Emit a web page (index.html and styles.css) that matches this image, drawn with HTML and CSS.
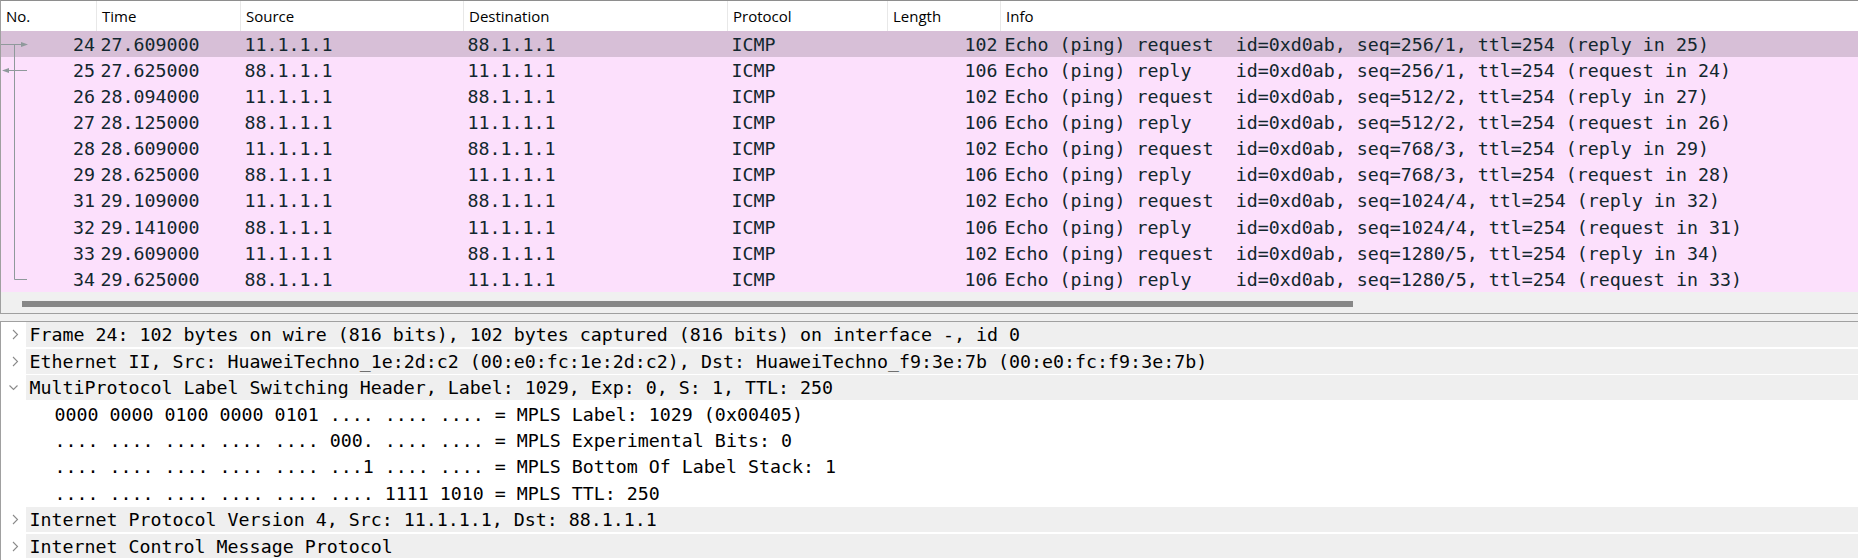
FILE: index.html
```html
<!DOCTYPE html>
<html>
<head>
<meta charset="utf-8">
<link rel="stylesheet" href="styles.css">
</head>
<body>
<div class="plist">
  <div class="phead">
    <div class="hc">No.</div>
    <div class="hc">Time</div>
    <div class="hc">Source</div>
    <div class="hc">Destination</div>
    <div class="hc">Protocol</div>
    <div class="hc">Length</div>
    <div class="hc last">Info</div>
  </div>

  <div class="prow sel">
    <div class="c no"><svg class="rel" width="30" height="26"><line x1="0" y1="13.5" x2="22" y2="13.5"/><polygon points="27,13.5 20,11 20,16"/><line x1="13.5" y1="13.5" x2="13.5" y2="27"/></svg><span>24</span></div>
    <div class="c">27.609000</div><div class="c">11.1.1.1</div><div class="c">88.1.1.1</div><div class="c">ICMP</div><div class="c len">102</div>
    <div class="c info">Echo (ping) request  id=0xd0ab, seq=256/1, ttl=254 (reply in 25)</div>
  </div>
  <div class="prow">
    <div class="c no"><svg class="rel" width="30" height="26"><line x1="6" y1="13.5" x2="26" y2="13.5"/><polygon points="1,13.5 8,11 8,16"/><line x1="13.5" y1="-1" x2="13.5" y2="27"/></svg><span>25</span></div>
    <div class="c">27.625000</div><div class="c">88.1.1.1</div><div class="c">11.1.1.1</div><div class="c">ICMP</div><div class="c len">106</div>
    <div class="c info">Echo (ping) reply    id=0xd0ab, seq=256/1, ttl=254 (request in 24)</div>
  </div>
  <div class="prow">
    <div class="c no"><svg class="rel" width="30" height="26"><line x1="13.5" y1="-1" x2="13.5" y2="27"/></svg><span>26</span></div>
    <div class="c">28.094000</div><div class="c">11.1.1.1</div><div class="c">88.1.1.1</div><div class="c">ICMP</div><div class="c len">102</div>
    <div class="c info">Echo (ping) request  id=0xd0ab, seq=512/2, ttl=254 (reply in 27)</div>
  </div>
  <div class="prow">
    <div class="c no"><svg class="rel" width="30" height="26"><line x1="13.5" y1="-1" x2="13.5" y2="27"/></svg><span>27</span></div>
    <div class="c">28.125000</div><div class="c">88.1.1.1</div><div class="c">11.1.1.1</div><div class="c">ICMP</div><div class="c len">106</div>
    <div class="c info">Echo (ping) reply    id=0xd0ab, seq=512/2, ttl=254 (request in 26)</div>
  </div>
  <div class="prow">
    <div class="c no"><svg class="rel" width="30" height="26"><line x1="13.5" y1="-1" x2="13.5" y2="27"/></svg><span>28</span></div>
    <div class="c">28.609000</div><div class="c">11.1.1.1</div><div class="c">88.1.1.1</div><div class="c">ICMP</div><div class="c len">102</div>
    <div class="c info">Echo (ping) request  id=0xd0ab, seq=768/3, ttl=254 (reply in 29)</div>
  </div>
  <div class="prow">
    <div class="c no"><svg class="rel" width="30" height="26"><line x1="13.5" y1="-1" x2="13.5" y2="27"/></svg><span>29</span></div>
    <div class="c">28.625000</div><div class="c">88.1.1.1</div><div class="c">11.1.1.1</div><div class="c">ICMP</div><div class="c len">106</div>
    <div class="c info">Echo (ping) reply    id=0xd0ab, seq=768/3, ttl=254 (request in 28)</div>
  </div>
  <div class="prow">
    <div class="c no"><svg class="rel" width="30" height="26"><line x1="13.5" y1="-1" x2="13.5" y2="27"/></svg><span>31</span></div>
    <div class="c">29.109000</div><div class="c">11.1.1.1</div><div class="c">88.1.1.1</div><div class="c">ICMP</div><div class="c len">102</div>
    <div class="c info">Echo (ping) request  id=0xd0ab, seq=1024/4, ttl=254 (reply in 32)</div>
  </div>
  <div class="prow">
    <div class="c no"><svg class="rel" width="30" height="26"><line x1="13.5" y1="-1" x2="13.5" y2="27"/></svg><span>32</span></div>
    <div class="c">29.141000</div><div class="c">88.1.1.1</div><div class="c">11.1.1.1</div><div class="c">ICMP</div><div class="c len">106</div>
    <div class="c info">Echo (ping) reply    id=0xd0ab, seq=1024/4, ttl=254 (request in 31)</div>
  </div>
  <div class="prow">
    <div class="c no"><svg class="rel" width="30" height="26"><line x1="13.5" y1="-1" x2="13.5" y2="27"/></svg><span>33</span></div>
    <div class="c">29.609000</div><div class="c">11.1.1.1</div><div class="c">88.1.1.1</div><div class="c">ICMP</div><div class="c len">102</div>
    <div class="c info">Echo (ping) request  id=0xd0ab, seq=1280/5, ttl=254 (reply in 34)</div>
  </div>
  <div class="prow">
    <div class="c no"><svg class="rel" width="30" height="26"><polyline points="13.5,-1 13.5,13.5 26,13.5"/></svg><span>34</span></div>
    <div class="c">29.625000</div><div class="c">88.1.1.1</div><div class="c">11.1.1.1</div><div class="c">ICMP</div><div class="c len">106</div>
    <div class="c info">Echo (ping) reply    id=0xd0ab, seq=1280/5, ttl=254 (request in 33)</div>
  </div>

  <div class="hscroll"><div class="thumb"></div></div>
</div>

<div class="splitter"></div>

<div class="dtree">
  <div class="drow top">
    <span class="exp"><svg width="25" height="25"><polyline points="12,8 16.5,12.5 12,17"/></svg></span>
    <span class="lbl">Frame 24: 102 bytes on wire (816 bits), 102 bytes captured (816 bits) on interface -, id 0</span>
  </div>
  <div class="drow top">
    <span class="exp"><svg width="25" height="25"><polyline points="12,8 16.5,12.5 12,17"/></svg></span>
    <span class="lbl">Ethernet II, Src: HuaweiTechno_1e:2d:c2 (00:e0:fc:1e:2d:c2), Dst: HuaweiTechno_f9:3e:7b (00:e0:fc:f9:3e:7b)</span>
  </div>
  <div class="drow top">
    <span class="exp"><svg width="25" height="25"><polyline points="8.5,10.5 12.5,14.5 16.5,10.5"/></svg></span>
    <span class="lbl">MultiProtocol Label Switching Header, Label: 1029, Exp: 0, S: 1, TTL: 250</span>
  </div>
  <div class="drow child"><span class="lbl">0000 0000 0100 0000 0101 .... .... .... = MPLS Label: 1029 (0x00405)</span></div>
  <div class="drow child"><span class="lbl">.... .... .... .... .... 000. .... .... = MPLS Experimental Bits: 0</span></div>
  <div class="drow child"><span class="lbl">.... .... .... .... .... ...1 .... .... = MPLS Bottom Of Label Stack: 1</span></div>
  <div class="drow child"><span class="lbl">.... .... .... .... .... .... 1111 1010 = MPLS TTL: 250</span></div>
  <div class="drow top">
    <span class="exp"><svg width="25" height="25"><polyline points="12,8 16.5,12.5 12,17"/></svg></span>
    <span class="lbl">Internet Protocol Version 4, Src: 11.1.1.1, Dst: 88.1.1.1</span>
  </div>
  <div class="drow top">
    <span class="exp"><svg width="25" height="25"><polyline points="12,8 16.5,12.5 12,17"/></svg></span>
    <span class="lbl">Internet Control Message Protocol</span>
  </div>
</div>
</body>
</html>
```

FILE: styles.css
```css
html, body {
  margin: 0;
  padding: 0;
}
body {
  width: 1858px;
  height: 560px;
  overflow: hidden;
  background: #f0f0f0;
  display: flex;
  flex-direction: column;
}

/* ---------- packet list ---------- */
.plist {
  flex: none;
  background: #ffffff;
  border-top: 1px solid #8e8e8e;
  border-left: 1px solid #a0a0a0;
  border-bottom: 1px solid #a0a0a0;
}
.phead,
.prow {
  display: grid;
  grid-template-columns: 96px 144px 223px 264px 160px 113px 1fr;
}
.phead {
  height: 30px;
  background: #ffffff;
  font-family: "Open Sans", "Noto Sans", sans-serif;
  font-size: 15px;
  color: #000000;
}
.hc {
  display: flex;
  align-items: center;
  padding-left: 5px;
  border-right: 1px solid #e8e8e8;
  white-space: nowrap;
}
.hc.last {
  border-right: none;
}
.prow {
  height: 26.15px;
  background: #fce0fc;
  font-family: "DejaVu Sans Mono", "Liberation Mono", monospace;
  font-size: 18.3px;
  color: #12272e;
}
.prow.sel {
  background: #d7bfd7;
}
.c {
  display: flex;
  align-items: center;
  padding-left: 3.5px;
  white-space: pre;
  overflow: hidden;
}
.c.no {
  padding-left: 0;
  padding-right: 2px;
  justify-content: space-between;
  overflow: visible;
}
.c.len {
  justify-content: flex-end;
  padding-right: 3.5px;
}
.rel {
  flex: none;
  height: 26.15px;
  overflow: visible;
}
.rel line,
.rel polyline {
  stroke: #8f999b;
  stroke-width: 1;
  fill: none;
}
.rel polygon {
  fill: #8f999b;
}

.hscroll {
  height: 20.8px;
  background: #f0f0f0;
  padding-left: 21px;
  box-sizing: border-box;
  padding-top: 8.2px;
}
.thumb {
  width: 1331px;
  height: 6px;
  background: #888888;
}

/* ---------- splitter ---------- */
.splitter {
  flex: none;
  height: 6.4px;
}

/* ---------- detail tree ---------- */
.dtree {
  flex: 1;
  min-height: 0;
  overflow: hidden;
  background: #ffffff;
  border-top: 1px solid #a0a0a0;
  border-left: 1px solid #a0a0a0;
  padding-top: 0.9px;
  font-family: "DejaVu Sans Mono", "Liberation Mono", monospace;
  font-size: 18.3px;
  color: #000000;
}
.drow {
  display: flex;
  align-items: stretch;
  height: 24.8px;
  margin-bottom: 1.6px;
}
.exp {
  flex: none;
  width: 25px;
  display: flex;
  align-items: center;
}
.exp svg polyline {
  stroke: #8a8a8a;
  stroke-width: 1.1;
  fill: none;
}
.lbl {
  flex: 1;
  display: flex;
  align-items: center;
  white-space: pre;
  padding-left: 3.5px;
}
.drow.top .lbl {
  background: #efefef;
}
.drow.child .lbl {
  padding-left: 28.5px;
  margin-left: 25px;
}
```
